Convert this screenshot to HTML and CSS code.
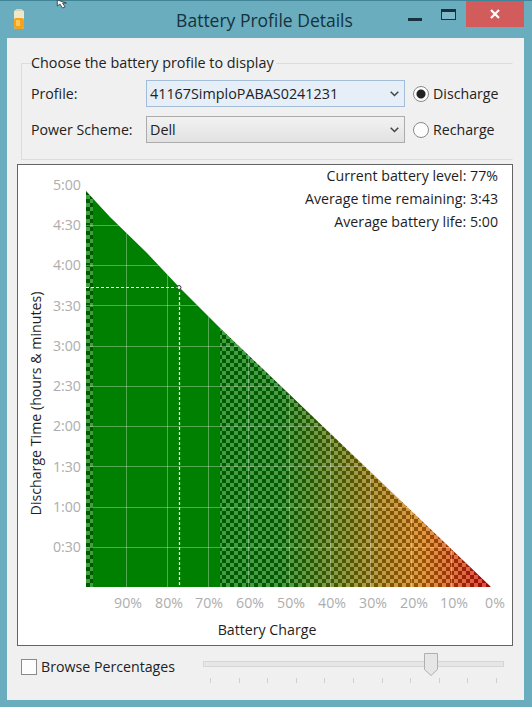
FILE: index.html
```html
<!DOCTYPE html>
<html lang="en">
<head>
<meta charset="utf-8">
<title>Battery Profile Details</title>
<link rel="stylesheet" href="styles.css">
</head>
<body>
<div class="window">
  <header class="titlebar">
    <svg class="app-icon" width="14" height="22" viewBox="0 0 14 22">
      <rect x="2" y="1" width="10" height="19" rx="2" fill="#f0e6c8"/>
      <rect x="4" y="0" width="6" height="2" fill="#d8d2b8"/>
      <rect x="2" y="9" width="10" height="11" rx="2" fill="#f5a21e"/>
      <rect x="4" y="11" width="4" height="6" fill="#ffc85a"/>
    </svg>
    <h1 class="title">Battery Profile Details</h1>
    <div class="controls">
      <span class="ctl ctl-min"></span>
      <span class="ctl ctl-max"></span>
      <span class="ctl-close">
        <svg width="12" height="12" viewBox="0 0 12 12"><path d="M2 2l8 8M10 2l-8 8" stroke="#fff" stroke-width="2.2" fill="none"/></svg>
      </span>
    </div>
    <svg class="cursor" width="13" height="10" viewBox="0 0 13 10"><path d="M1 0v6l2-2 2 4 2-1-2-4h3z" transform="scale(1.3 1)" fill="#fff" stroke="#333" stroke-width=".7"/></svg>
  </header>
  <main class="client">
    <fieldset class="group">
      <legend class="legend">Choose the battery profile to display</legend>
      <div class="form">
        <span class="label">Profile:</span>
        <div class="combo combo-active"><span>41167SimploPABAS0241231</span><svg class="chev" width="9" height="6" viewBox="0 0 9 6"><path d="M.7.700l3.800 3.800L8.300.700" stroke="#444" stroke-width="1.500" fill="none"/></svg></div>
        <div class="radio-row"><span class="radio radio-on"></span><span>Discharge</span></div>
        <span class="label">Power Scheme:</span>
        <div class="combo"><span>Dell</span><svg class="chev" width="9" height="6" viewBox="0 0 9 6"><path d="M.7.700l3.800 3.800L8.300.700" stroke="#444" stroke-width="1.500" fill="none"/></svg></div>
        <div class="radio-row"><span class="radio"></span><span>Recharge</span></div>
      </div>
    </fieldset>
    <section class="chart">
      <svg class="plot" width="494" height="480" viewBox="18 165 494 480">
        <defs>
          <linearGradient id="heat" gradientUnits="userSpaceOnUse" x1="220" y1="0" x2="491" y2="0">
            <stop offset="0" stop-color="#008000"/>
            <stop offset=".22" stop-color="#0a7d08"/>
            <stop offset=".45" stop-color="#6a7c08"/>
            <stop offset=".6" stop-color="#ac7c08"/>
            <stop offset=".75" stop-color="#d87808"/>
            <stop offset="1" stop-color="#d80808"/>
          </linearGradient>
          <pattern id="check" patternUnits="userSpaceOnUse" width="8" height="8" x="86" y="191">
            <rect width="4" height="4" fill="#000" fill-opacity=".3"/>
            <rect x="4" y="4" width="4" height="4" fill="#000" fill-opacity=".3"/>
            <rect x="4" width="4" height="4" fill="#fff" fill-opacity=".25"/>
            <rect y="4" width="4" height="4" fill="#fff" fill-opacity=".25"/>
          </pattern>
          <clipPath id="tri"><path d="M86 191L110 217L147 253L179 287L220 328L491 587H86Z"/></clipPath>
        </defs>
        <path d="M86 191L110 217L147 253L179 287L220 328L491 587H86Z" fill="url(#heat)"/>
        <g clip-path="url(#tri)">
          <rect x="86" y="185" width="7" height="402" fill="url(#check)"/>
          <rect x="220" y="320" width="272" height="267" fill="url(#check)"/>
          <path class="grid" d="M126.500 185V587M167.500 185V587M208.500 185V587M248.500 185V587M289.500 185V587M330.500 185V587M370.500 185V587M411.500 185V587M451.500 185V587M86 225.500H491M86 265.500H491M86 305.500H491M86 346.500H491M86 386.500H491M86 426.500H491M86 466.500H491M86 507.500H491M86 547.500H491"/>
        </g>
        <path class="cross" d="M86 287.500H179M179.500 287V587"/>
        <circle class="marker" cx="179" cy="287.500" r="2"/>
        <g class="ytick" text-anchor="end">
          <text x="81" y="190">5:00</text><text x="81" y="230">4:30</text><text x="81" y="270">4:00</text><text x="81" y="311">3:30</text><text x="81" y="351">3:00</text><text x="81" y="391">2:30</text><text x="81" y="431">2:00</text><text x="81" y="472">1:30</text><text x="81" y="512">1:00</text><text x="81" y="552">0:30</text>
        </g>
        <g class="ytick" text-anchor="middle">
          <text x="128" y="608">90%</text><text x="169" y="608">80%</text><text x="209" y="608">70%</text><text x="250" y="608">60%</text><text x="291" y="608">50%</text><text x="332" y="608">40%</text><text x="373" y="608">30%</text><text x="414" y="608">20%</text><text x="454" y="608">10%</text><text x="495" y="608">0%</text>
        </g>
        <g class="info" text-anchor="end">
          <text x="498" y="181">Current battery level: 77%</text>
          <text x="498" y="204">Average time remaining: 3:43</text>
          <text x="498" y="227">Average battery life: 5:00</text>
        </g>
        <text class="axis" x="267" y="635" text-anchor="middle">Battery Charge</text>
        <text class="axis" transform="translate(41 403.500) rotate(-90)" text-anchor="middle">Discharge Time (hours &amp; minutes)</text>
      </svg>
    </section>
    <footer class="footer">
      <label class="check-row"><span class="checkbox"></span><span>Browse Percentages</span></label>
      <div class="slider">
        <div class="track"></div>
        <svg class="thumb" width="14" height="23" viewBox="0 0 14 23"><path d="M.5.500H13.500V16.500L7 22.500L.5 16.500Z" fill="#e6e6e6" stroke="#b0b0b0"/></svg>
        <div class="ticks"><i></i><i></i><i></i><i></i><i></i><i></i><i></i><i></i><i></i><i></i><i></i></div>
      </div>
    </footer>
  </main>
</div>
</body>
</html>
```
FILE: styles.css
```css
* { box-sizing: border-box; }
html, body { margin: 0; padding: 0; }
body {
  width: 532px;
  height: 707px;
  overflow: hidden;
  background: #69adbe;
  font-family: "Open Sans", "Noto Sans", sans-serif;
  font-size: 14.2px;
  color: #222;
}
.window {
  height: 707px;
  border-top: 1px solid #3f8497;
  display: flex;
  flex-direction: column;
}
.titlebar {
  position: relative;
  height: 37px;
  flex: none;
  display: flex;
  align-items: center;
  justify-content: center;
}
.app-icon { position: absolute; left: 12px; top: 8px; }
.cursor { position: absolute; left: 56px; top: -1px; }
.title {
  margin: 0 0 0 -3px;
  font-size: 17.5px;
  font-weight: 400;
  color: #16323c;
}
.controls { position: absolute; top: 0; right: 8px; display: flex; align-items: flex-start; }
.ctl { display: block; }
.ctl-min { width: 14px; height: 3px; margin-top: 17px; margin-right: 19px; background: #16323c; }
.ctl-max { width: 15px; height: 11px; margin-top: 8px; margin-right: 10px; border: 1px solid #16323c; border-top-width: 3px; background: #7db9c8; }
.ctl-close {
  width: 58px;
  height: 26px;
  background: #d25b5b;
  display: flex;
  align-items: center;
  justify-content: center;
}
.client {
  flex: none;
  height: 662px;
  margin: 0 8px 0 7px;
  padding: 15px 10px 0;
  background: #f0f0f0;
  display: flex;
  flex-direction: column;
}
.group {
  margin: 0 0 0 4px;
  width: 492px;
  height: 107px;
  padding: 0 0 0 9px;
  border: 1px solid #dcdcdc;
  border-right-color: transparent;
  min-inline-size: 0;
}
.legend { padding: 0 2px 0 0; background: #f0f0f0; line-height: 20px; font-size: 14.35px; }
.form {
  display: grid;
  grid-template-columns: 115px 259px auto;
  grid-auto-rows: 27px;
  row-gap: 9px;
  align-items: center;
  margin-top: 7px;
}
.label { line-height: 20px; }
.combo {
  height: 27px;
  padding: 0 5px 0 3px;
  border: 1px solid #acacac;
  background: linear-gradient(#f2f2f2, #e2e2e2);
  display: flex;
  align-items: center;
  justify-content: space-between;
  font-size: 14.35px;
}
.combo-active { border-color: #a3bdd8; background: #e6eff8; }
.radio-row { display: flex; align-items: center; gap: 4px; padding-left: 8px; }
.radio {
  width: 16px;
  height: 16px;
  border-radius: 50%;
  border: 1px solid #8a8a8a;
  background: #fdfdfd;
}
.radio-on { background: radial-gradient(circle, #222 0 4px, #fdfdfd 5px); }
.chart {
  margin-top: 4px;
  width: 496px;
  height: 482px;
  flex: none;
  border: 1px solid #646464;
  background: #fff;
}
.plot { display: block; font-family: "Open Sans", "Noto Sans", sans-serif; font-size: 14.2px; }
.grid { stroke: #fff; stroke-opacity: .32; stroke-width: 1; fill: none; }
.cross { stroke: #fff; stroke-width: 1.2; stroke-dasharray: 3 2; fill: none; }
.marker { fill: #fff; stroke: #333; stroke-width: 1; }
.ytick { fill: #adadad; }
.info, .axis { fill: #1e1e1e; }
.footer { display: flex; align-items: flex-start; flex: none; padding-top: 6px; padding-left: 4px; }
.check-row { display: flex; align-items: center; gap: 4px; width: 182px; height: 24px; line-height: 24px; margin-top: 3px; }
.checkbox { width: 16px; height: 16px; border: 1px solid #8a8a8a; background: #fdfdfd; }
.slider { position: relative; width: 301px; height: 40px; }
.track { margin-top: 9px; height: 6px; background: #e6e6e6; border: 1px solid #d6d6d6; }
.thumb { position: absolute; left: 221px; top: 1px; }
.ticks { display: flex; justify-content: space-between; margin: 11px 7px 0; }
.ticks i { display: block; width: 1px; height: 5px; background: #cfcfcf; }
```
